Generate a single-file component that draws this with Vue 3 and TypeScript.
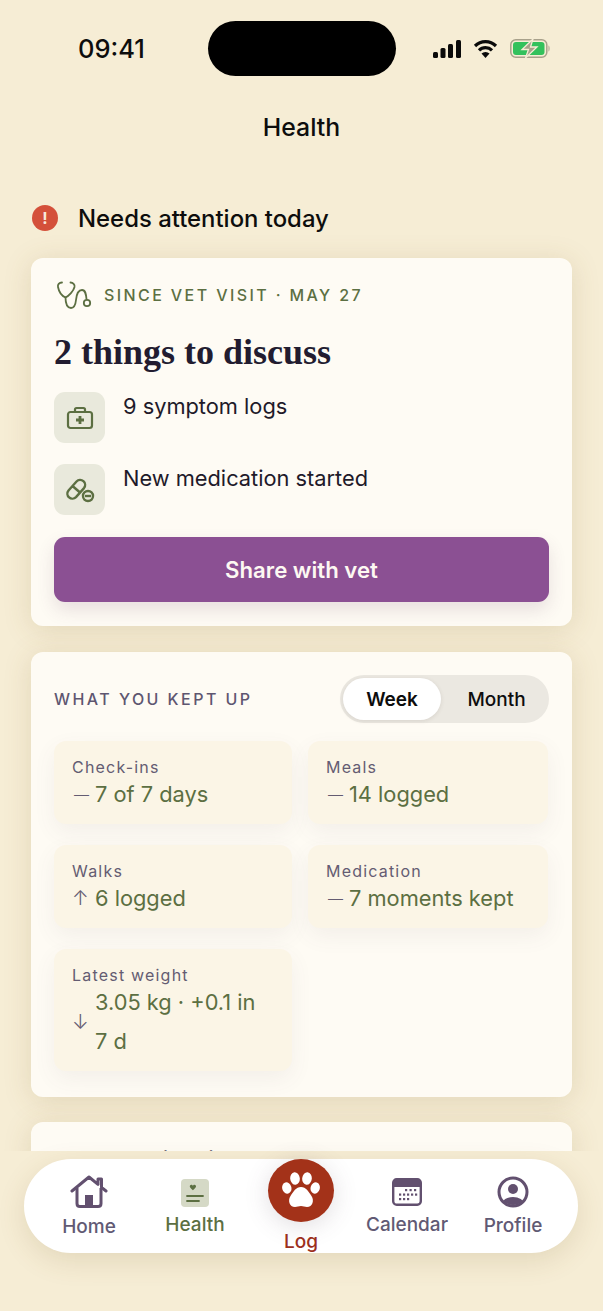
<script setup lang="ts">
interface Stat {
  label: string;
  arrow: string;
  value: string;
}

const stats: Stat[] = [
  { label: 'Check-ins', arrow: '—', value: '7 of 7 days' },
  { label: 'Meals', arrow: '—', value: '14 logged' },
  { label: 'Walks', arrow: '↑', value: '6 logged' },
  { label: 'Medication', arrow: '—', value: '7 moments kept' },
  { label: 'Latest weight', arrow: '↓', value: '3.05 kg · +0.1 in 7\u00a0d' },
];
</script>

<template>
  <div class="screen">
    <div class="statusBar">
      <span class="time">09:41</span>
      <div class="island"></div>
      <div class="statusIcons">
        <svg width="28" height="18" viewBox="0 0 28 18">
          <rect x="0" y="12" width="5" height="6" rx="1.5" fill="#0a0a0a" />
          <rect x="7.500" y="8" width="5" height="10" rx="1.5" fill="#0a0a0a" />
          <rect x="15" y="4" width="5" height="14" rx="1.5" fill="#0a0a0a" />
          <rect x="23" y="0" width="5" height="18" rx="1.5" fill="#0a0a0a" />
        </svg>
        <svg width="25" height="19" viewBox="0 0 25 19">
          <path d="M2 7a15 15 0 0 1 21 0M6 11.300a9.300 9.300 0 0 1 13 0" fill="none" stroke="#0a0a0a" stroke-width="3.200" />
          <path d="M12.500 19 8.500 14.500a5.800 5.800 0 0 1 8 0z" fill="#0a0a0a" />
        </svg>
        <svg width="40" height="19" viewBox="0 0 40 19">
          <rect x="0.800" y="0.800" width="36" height="17.400" rx="5" fill="#f6edd5" stroke="#a8a18b" stroke-width="1.500" />
          <rect x="3" y="3" width="31.500" height="13" rx="3" fill="#33c15c" />
          <path d="M38.500 6.500c1.400.4 1.400 5.600 0 6z" fill="#a8a18b" />
          <path d="M23 0 12 10.500h6.500L15.500 19 27 8h-6.500z" fill="#a8a18b" stroke="#f6edd5" stroke-width="1.300" />
        </svg>
      </div>
    </div>

    <h1 class="pageTitle">Health</h1>

    <div class="scrollArea">
      <div class="attention">
        <span class="alertDot">!</span>
        <span>Needs attention today</span>
      </div>

      <section class="card vetCard">
        <div class="eyebrow">
          <svg width="36" height="30" viewBox="0 0 36 30" fill="none" stroke="#5c6f42" stroke-width="1.800" stroke-linecap="round" stroke-linejoin="round">
            <path d="M6 2.500C3 2.500 1.500 4.500 2 7 3 12 6 16 9.500 17.500 13 16 17.500 11 18.500 7 19 4.500 17 2.500 14.500 2.500" />
            <path d="M9.500 17.500C9.500 23 11 28 15 28c3.500 0 4.500-3 5-8 .5-5 2.500-10 6-10s4 4 4.500 9" />
            <circle cx="31" cy="23" r="3.200" />
          </svg>
          <span>SINCE VET VISIT · MAY 27</span>
        </div>
        <h2 class="vetTitle">2 things to discuss</h2>
        <div class="discussRow">
          <div class="discussIcon">
            <svg width="28" height="24" viewBox="0 0 28 24" fill="none" stroke="#5c6f42" stroke-width="2.200">
              <rect x="2" y="6" width="24" height="16" rx="2.500" />
              <path d="M9 6V3.500C9 2.500 9.500 2 10.500 2h7C18.500 2 19 2.500 19 3.500V6" />
              <path d="M14 10v8M10 14h8" stroke-width="2.800" />
            </svg>
          </div>
          <span>9 symptom logs</span>
        </div>
        <div class="discussRow">
          <div class="discussIcon">
            <svg width="30" height="26" viewBox="0 0 30 26" fill="none" stroke="#5c6f42" stroke-width="2.400">
              <path d="M3.500 13.500 11.500 4.500a5 5 0 0 1 7.500 6.600l-8 9a5 5 0 0 1-7.500-6.600zM7.500 9l7.500 6.500" />
              <circle cx="23" cy="19" r="5" />
              <path d="M20 19h6" />
            </svg>
          </div>
          <span>New medication started</span>
        </div>
        <button class="shareBtn" type="button">Share with vet</button>
      </section>

      <section class="card keptCard">
        <div class="keptHead">
          <span class="keptTitle">WHAT YOU KEPT UP</span>
          <div class="toggle">
            <button class="toggleOn" type="button">Week</button>
            <button type="button">Month</button>
          </div>
        </div>
        <div class="statGrid">
          <div v-for="stat in stats" :key="stat.label" class="stat">
            <div class="statLabel">{{ stat.label }}</div>
            <div class="statValue">
              <span class="statArrow" :class="{ isDash: stat.arrow === '—' }">{{ stat.arrow }}</span>
              <span>{{ stat.value }}</span>
            </div>
          </div>
        </div>
      </section>

      <section class="card peekCard">
        <span class="peekText">Conversation tips</span>
      </section>
    </div>

    <nav class="tabBar">
      <div class="tab tabHome">
        <svg width="38" height="34" viewBox="0 0 38 34">
          <path d="M2 16 19 2l9 7.400V4h3.500v8.300L36 16" fill="none" stroke="#62506f" stroke-width="3" stroke-linecap="round" stroke-linejoin="round" />
          <path d="M7 13v15.500c0 2 1 3 3 3h18c2 0 3-1 3-3V13" fill="none" stroke="#62506f" stroke-width="3" />
          <rect x="15" y="20" width="8" height="11" fill="#62506f" />
        </svg>
        <span>Home</span>
      </div>
      <div class="tab tabHealth">
        <svg width="28" height="28" viewBox="0 0 28 28">
          <rect width="28" height="28" rx="4" fill="#d5d9c6" />
          <path d="M9 6.500c1-1.500 2.500-.8 2.900.2.400-1 1.900-1.700 2.900-.2.800 1.200-.4 2.800-2.900 4.800-2.500-2-3.700-3.600-2.900-4.800z" fill="#5c6f42" />
          <path d="M6 17h16M6 22h12" stroke="#5c6f42" stroke-width="1.800" stroke-linecap="round" />
        </svg>
        <span>Health</span>
      </div>
      <div class="tab tabLog">
        <div class="logCircle">
          <svg width="38" height="37" viewBox="0 0 38 37" fill="#fff">
            <ellipse cx="4.800" cy="16" rx="4.600" ry="5.800" transform="rotate(-15 4.800 16)" />
            <ellipse cx="13" cy="6.500" rx="4.800" ry="6.300" transform="rotate(-6 13 6.500)" />
            <ellipse cx="25" cy="6.500" rx="4.800" ry="6.300" transform="rotate(6 25 6.500)" />
            <ellipse cx="33.200" cy="16" rx="4.600" ry="5.800" transform="rotate(15 33.200 16)" />
            <path d="M19 15c5 0 7.500 4.500 10.500 9 3 4.500 1 11-4.500 11-2.200 0-3.800-1-6-1s-3.800 1-6 1c-5.500 0-7.500-6.500-4.500-11C11.500 19.500 14 15 19 15z" />
          </svg>
        </div>
        <span>Log</span>
      </div>
      <div class="tab tabCalendar">
        <svg width="30" height="28" viewBox="0 0 30 28">
          <rect x="1.200" y="1.200" width="27.600" height="25.600" rx="3.500" fill="#fff" stroke="#62506f" stroke-width="2.400" />
          <path d="M1.200 9V4.700c0-2 1.500-3.500 3.500-3.500h20.600c2 0 3.500 1.500 3.500 3.500V9z" fill="#62506f" />
          <g fill="#62506f">
            <rect x="13" y="11" width="2.200" height="2.200" /><rect x="17.500" y="11" width="2.200" height="2.200" /><rect x="22" y="11" width="2.200" height="2.200" />
            <rect x="7" y="15.500" width="2.200" height="2.200" /><rect x="11" y="15.500" width="2.200" height="2.200" /><rect x="15" y="15.500" width="2.200" height="2.200" /><rect x="19" y="15.500" width="2.200" height="2.200" /><rect x="23" y="15.500" width="2.200" height="2.200" />
            <rect x="7" y="20" width="2.200" height="2.200" /><rect x="11" y="20" width="2.200" height="2.200" /><rect x="15" y="20" width="2.200" height="2.200" />
          </g>
        </svg>
        <span>Calendar</span>
      </div>
      <div class="tab tabProfile">
        <svg width="32" height="32" viewBox="0 0 32 32">
          <defs>
            <clipPath id="profileClip"><circle cx="16" cy="16" r="13" /></clipPath>
          </defs>
          <circle cx="16" cy="16" r="14" fill="none" stroke="#62506f" stroke-width="3" />
          <circle cx="16" cy="13" r="5" fill="#62506f" />
          <ellipse cx="16" cy="28" rx="11" ry="7" fill="#62506f" clip-path="url(#profileClip)" />
        </svg>
        <span>Profile</span>
      </div>
    </nav>
  </div>
</template>

<style scoped>
.screen {
  display: flex;
  flex-direction: column;
  height: 1311px;
  overflow: hidden;
  background: #f6edd5;
  font-family: Inter, "Liberation Sans", sans-serif;
  color: #0d0d0d;
}

.statusBar {
  display: flex;
  align-items: center;
  height: 55px;
  margin-top: 21px;
  padding: 0 53px 0 78px;
  flex-shrink: 0;
}

.time {
  width: 130px;
  font-size: 25.500px;
  font-weight: 500;
}

.island {
  width: 188px;
  height: 55px;
  border-radius: 28px;
  background: #000;
}

.statusIcons {
  display: flex;
  align-items: center;
  gap: 12px;
  margin-left: auto;
}

.pageTitle {
  margin: 35px 0 0;
  height: 32px;
  text-align: center;
  font-size: 24.800px;
  line-height: 32px;
  font-weight: 500;
  flex-shrink: 0;
}

.scrollArea {
  height: 1008px;
  padding: 0 31px;
  flex-shrink: 0;
  overflow: hidden;
}

.attention {
  display: flex;
  align-items: center;
  gap: 20px;
  margin-top: 59px;
  height: 32px;
  font-size: 23.900px;
  font-weight: 500;
}

.alertDot {
  display: flex;
  align-items: center;
  justify-content: center;
  width: 26px;
  height: 26px;
  margin-left: 1px;
  border-radius: 50%;
  background: #d4503a;
  color: #f8e9dc;
  font-size: 16px;
  font-weight: 700;
}

.card {
  box-sizing: border-box;
  background: #fefbf4;
  border-radius: 12px;
  box-shadow: 0 4px 28px rgba(130, 100, 40, 0.17);
}

.vetCard {
  margin-top: 24px;
  height: 368px;
  padding: 22px 23px 0;
}

.eyebrow {
  display: flex;
  align-items: center;
  gap: 12px;
  margin-left: 2px;
  height: 30px;
  color: #5c6f42;
  font-size: 16px;
  font-weight: 500;
  letter-spacing: 2.400px;
}

.vetTitle {
  margin: 21px 0 0;
  height: 42px;
  color: #221c30;
  font-family: "Liberation Serif", serif;
  font-size: 36px;
  line-height: 42px;
  font-weight: 700;
}

.discussRow {
  display: flex;
  gap: 18px;
  margin-top: 19px;
  font-size: 21.800px;
  line-height: 28px;
  color: #1f1a2a;
}

.discussRow + .discussRow {
  margin-top: 21px;
}

.discussIcon {
  display: flex;
  align-items: center;
  justify-content: center;
  width: 51px;
  height: 51px;
  border-radius: 11px;
  background: #e9e9dc;
}

.shareBtn {
  display: block;
  width: 100%;
  height: 65px;
  margin-top: 22px;
  border: none;
  border-radius: 11px;
  background: #8b5093;
  color: #fdf8f2;
  font-family: inherit;
  font-size: 22.200px;
  font-weight: 600;
  box-shadow: 0 8px 18px rgba(90, 60, 90, 0.14);
}

.keptCard {
  margin-top: 26px;
  height: 445px;
  padding: 23px 23px 0;
}

.keptHead {
  display: flex;
  align-items: center;
  justify-content: space-between;
}

.keptTitle {
  color: #5e5670;
  font-size: 16px;
  font-weight: 500;
  letter-spacing: 2.450px;
}

.toggle {
  display: flex;
  width: 209px;
  height: 48px;
  padding: 3px;
  box-sizing: border-box;
  border-radius: 24px;
  background: #ebe8e1;
}

.toggle button {
  flex: 1;
  border: none;
  background: none;
  border-radius: 21px;
  padding: 0 0 0 6px;
  color: #0d0d0d;
  font-family: inherit;
  font-size: 19px;
  font-weight: 500;
}

.toggle .toggleOn {
  flex: 0 0 98px;
  padding: 0;
  background: #fff;
  font-weight: 600;
  box-shadow: 0 1px 4px rgba(70, 60, 50, 0.12);
}

.statGrid {
  display: grid;
  grid-template-columns: 238px 240px;
  gap: 21px 16px;
  margin-top: 18px;
}

.stat {
  box-sizing: border-box;
  padding: 16px 18px 10px;
  border-radius: 12px;
  background: #fbf5e6;
  box-shadow: 0 8px 22px rgba(95, 85, 100, 0.07);
}

.statLabel {
  color: #645c72;
  font-size: 16px;
  line-height: 20px;
  letter-spacing: 1.200px;
}

.statValue {
  display: flex;
  align-items: center;
  margin-top: -2px;
  color: #5c6f42;
  font-size: 21.800px;
  line-height: 39px;
}

.statArrow {
  flex: 0 0 23px;
  color: #645c72;
  font-size: 20px;
  font-weight: 300;
}

.statArrow.isDash {
  padding-left: 2px;
  box-sizing: border-box;
  font-size: 15px;
}

.peekCard {
  margin-top: 25px;
  height: 60px;
  padding: 23px 24px;
  font-size: 22px;
  line-height: 28px;
}

.peekText {
  color: #4a4358;
  font-weight: 500;
}

.tabBar {
  position: absolute;
  top: 1159px;
  left: 24px;
  display: flex;
  box-sizing: border-box;
  width: 554px;
  height: 94px;
  padding: 0 12px;
  border-radius: 47px;
  background: #fff;
  box-shadow: 0 8px 28px rgba(110, 85, 30, 0.14);
}

.tab {
  display: flex;
  flex-direction: column;
  align-items: center;
  width: 106px;
  font-size: 19px;
  font-weight: 500;
  color: #615a74;
}

.tabHome {
  padding-top: 16px;
  gap: 6px;
}

.tabHealth {
  padding-top: 20px;
  gap: 6px;
  color: #5c6f42;
}

.tabLog {
  color: #9c2f1c;
}

.logCircle {
  display: flex;
  align-items: center;
  justify-content: center;
  width: 66px;
  height: 66px;
  margin-bottom: 8px;
  border-radius: 50%;
  background: #a33219;
  box-shadow: 0 4px 24px rgba(90, 70, 90, 0.18);
}

.tabCalendar {
  padding-top: 19px;
  gap: 7px;
}

.tabProfile {
  padding-top: 17px;
  gap: 6px;
}
</style>

<style>
html,
body {
  background: #f6edd5;
}
</style>
